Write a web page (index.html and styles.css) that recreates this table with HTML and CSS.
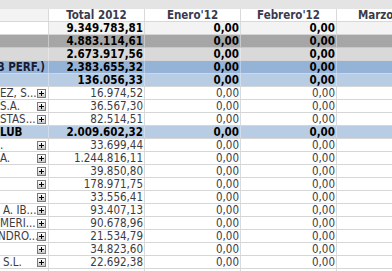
FILE: index.html
```html
<!DOCTYPE html>
<html>
<head>
<meta charset="utf-8">
<link rel="stylesheet" href="styles.css">
</head>
<body>
<div class="viewport">
  <div class="topband"></div>
  <div class="row head">
    <div class="c lab"></div>
    <div class="c">Total 2012</div>
    <div class="c">Enero'12</div>
    <div class="c">Febrero'12</div>
    <div class="c">Marzo'12</div>
  </div>
  <div class="row b r1"><div class="c lab"></div><div class="c">9.349.783,81</div><div class="c">0,00</div><div class="c">0,00</div><div class="c"></div></div>
  <div class="row b r2"><div class="c lab"></div><div class="c">4.883.114,61</div><div class="c">0,00</div><div class="c">0,00</div><div class="c"></div></div>
  <div class="row b r3"><div class="c lab"></div><div class="c">2.673.917,56</div><div class="c">0,00</div><div class="c">0,00</div><div class="c"></div></div>
  <div class="row b r4"><div class="c lab"><span class="t cut">(B PERF.)</span></div><div class="c">2.383.655,32</div><div class="c">0,00</div><div class="c">0,00</div><div class="c"></div></div>
  <div class="row b r5"><div class="c lab"></div><div class="c">136.056,33</div><div class="c">0,00</div><div class="c">0,00</div><div class="c"></div></div>
  <div class="row d"><div class="c lab"><span class="t">EZ, S...</span><i class="plus"></i></div><div class="c">16.974,52</div><div class="c">0,00</div><div class="c">0,00</div><div class="c"></div></div>
  <div class="row d"><div class="c lab"><span class="t">S.A.</span><i class="plus"></i></div><div class="c">36.567,30</div><div class="c">0,00</div><div class="c">0,00</div><div class="c"></div></div>
  <div class="row d"><div class="c lab"><span class="t">STAS...</span><i class="plus"></i></div><div class="c">82.514,51</div><div class="c">0,00</div><div class="c">0,00</div><div class="c"></div></div>
  <div class="row b r5"><div class="c lab"><span class="t">LUB</span></div><div class="c">2.009.602,32</div><div class="c">0,00</div><div class="c">0,00</div><div class="c"></div></div>
  <div class="row d"><div class="c lab"><span class="t">.</span><i class="plus"></i></div><div class="c">33.699,44</div><div class="c">0,00</div><div class="c">0,00</div><div class="c"></div></div>
  <div class="row d"><div class="c lab"><span class="t">A.</span><i class="plus"></i></div><div class="c">1.244.816,11</div><div class="c">0,00</div><div class="c">0,00</div><div class="c"></div></div>
  <div class="row d"><div class="c lab"><span class="t"></span><i class="plus"></i></div><div class="c">39.850,80</div><div class="c">0,00</div><div class="c">0,00</div><div class="c"></div></div>
  <div class="row d"><div class="c lab"><span class="t"></span><i class="plus"></i></div><div class="c">178.971,75</div><div class="c">0,00</div><div class="c">0,00</div><div class="c"></div></div>
  <div class="row d"><div class="c lab"><span class="t"></span><i class="plus"></i></div><div class="c">33.556,41</div><div class="c">0,00</div><div class="c">0,00</div><div class="c"></div></div>
  <div class="row d"><div class="c lab"><span class="t ind">A. IB...</span><i class="plus"></i></div><div class="c">93.407,13</div><div class="c">0,00</div><div class="c">0,00</div><div class="c"></div></div>
  <div class="row d"><div class="c lab"><span class="t">MERI...</span><i class="plus"></i></div><div class="c">90.678,96</div><div class="c">0,00</div><div class="c">0,00</div><div class="c"></div></div>
  <div class="row d"><div class="c lab"><span class="t nudge">NDRO...</span><i class="plus"></i></div><div class="c">21.534,79</div><div class="c">0,00</div><div class="c">0,00</div><div class="c"></div></div>
  <div class="row d"><div class="c lab"><span class="t"></span><i class="plus"></i></div><div class="c">34.823,60</div><div class="c">0,00</div><div class="c">0,00</div><div class="c"></div></div>
  <div class="row d"><div class="c lab"><span class="t ind">S.L.</span><i class="plus"></i></div><div class="c">22.692,38</div><div class="c">0,00</div><div class="c">0,00</div><div class="c"></div></div>
  <div class="row d"><div class="c lab"><span class="t"></span><i class="plus"></i></div><div class="c"></div><div class="c"></div><div class="c"></div><div class="c"></div></div>
</div>
</body>
</html>
```

FILE: styles.css
```css
html, body {
  margin: 0;
  padding: 0;
  background: #ffffff;
  overflow: hidden;
}
.viewport {
  width: 392px;
  height: 271px;
  overflow: hidden;
  font-family: "DejaVu Sans Condensed", "DejaVu Sans", sans-serif;
  font-stretch: semi-condensed;
  font-size: 11.5px;
}
.topband {
  height: 9px;
  background: #e4e4e4;
  width: 440px;
}
.row {
  display: grid;
  grid-template-columns: 49px 96px 96px 96px 96px;
  height: 13px;
  width: 440px;
  box-sizing: border-box;
  border-bottom: 1px solid #d6d6d6;
}
.c {
  box-sizing: border-box;
  border-right: 1px solid #dadada;
  line-height: 12px;
  height: 12px;
  text-align: right;
  padding-right: 1px;
  white-space: nowrap;
  overflow: hidden;
}
.lab {
  display: flex;
  align-items: center;
  text-align: left;
  padding-right: 0;
}
.t {
  flex: 1;
  overflow: hidden;
  white-space: nowrap;
  line-height: 12px;
}
.t.cut {
  margin-left: -8px;
}
.t.nudge {
  margin-left: -2px;
}
.t.ind {
  padding-left: 3px;
}
.plus {
  flex: none;
  width: 9px;
  height: 9px;
  box-sizing: border-box;
  margin-right: 2px;
  border: 1px solid #7a7a7a;
  background: linear-gradient(#ffffff, #c8c8c8);
  position: relative;
}
.plus::before, .plus::after {
  content: "";
  position: absolute;
  background: #000000;
}
.plus::before {
  left: 1px;
  top: 3px;
  width: 5px;
  height: 1px;
}
.plus::after {
  left: 3px;
  top: 1px;
  width: 1px;
  height: 5px;
}
.head {
  height: 13px;
  border-bottom: 1px solid #d8d8d8;
}
.head .c {
  background: #ffffff;
  text-align: center;
  font-weight: bold;
  color: #3a3a4e;
  padding-right: 0;
}
.head .lab {
  background: #f3f3f3;
}
.b .c {
  font-weight: bold;
  color: #000000;
}
.r1 .c { background: #f3f3f3; }
.r1 .lab { background: #ffffff; }
.r2 .c { background: #a6a6a6; border-right-color: #c8c8c8; }
.r2 { border-bottom-color: #c8c8c8; }
.r3 .c { background: #d9d9d9; border-right-color: #e6e6e6; }
.r4 .c { background: #95b3d7; border-right-color: #b8cce4; }
.r4 .t { color: #1a1a2e; }
.r5 .c { background: #b8cce4; border-right-color: #d0dcec; }
.d .c {
  background: #ffffff;
  color: #3c3c44;
}
```
